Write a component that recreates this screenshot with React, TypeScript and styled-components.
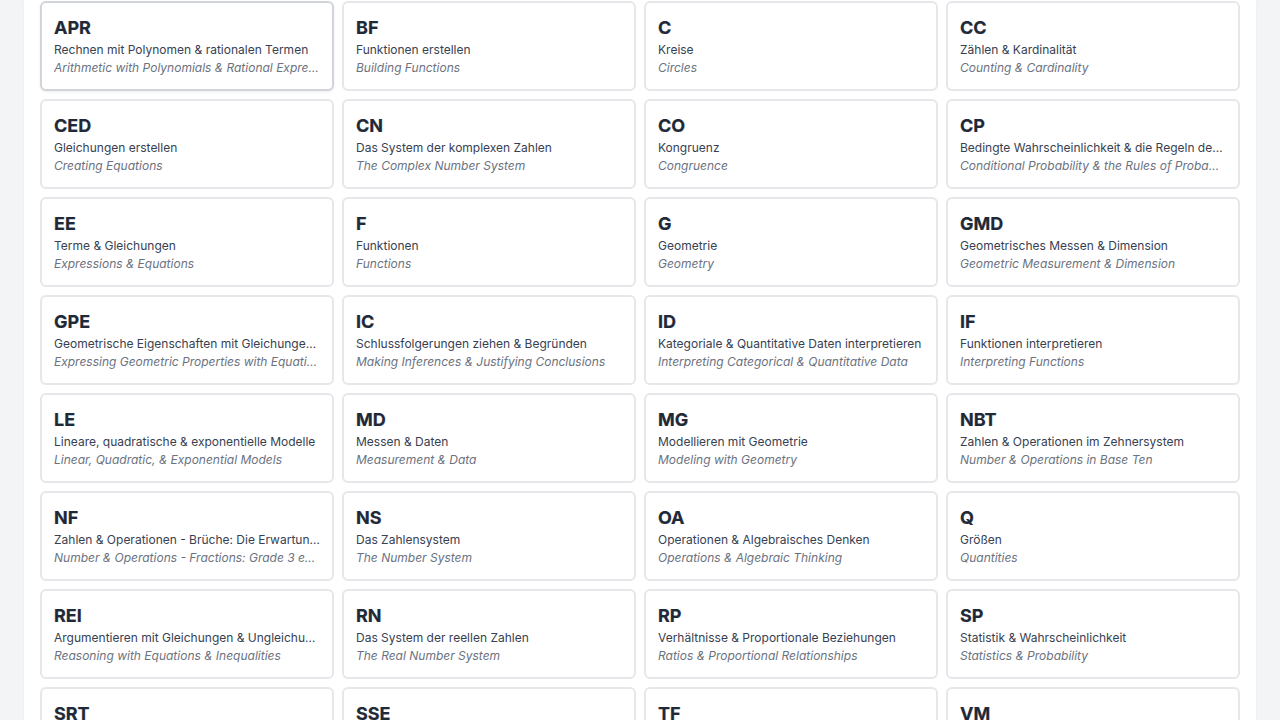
import styled, { createGlobalStyle } from "styled-components";

const GlobalStyle = createGlobalStyle`
  html, body {
    margin: 0;
    padding: 0;
    background: #f3f4f6;
    font-family: Inter, "Noto Sans", sans-serif;
    overflow: hidden;
  }
`;

type Domain = { code: string; de: string; en: string };

const domains: Domain[] = [
  { code: "APR", de: "Rechnen mit Polynomen & rationalen Termen", en: "Arithmetic with Polynomials & Rational Expressions" },
  { code: "BF", de: "Funktionen erstellen", en: "Building Functions" },
  { code: "C", de: "Kreise", en: "Circles" },
  { code: "CC", de: "Zählen & Kardinalität", en: "Counting & Cardinality" },
  { code: "CED", de: "Gleichungen erstellen", en: "Creating Equations" },
  { code: "CN", de: "Das System der komplexen Zahlen", en: "The Complex Number System" },
  { code: "CO", de: "Kongruenz", en: "Congruence" },
  { code: "CP", de: "Bedingte Wahrscheinlichkeit & die Regeln der Wahrscheinlichkeit", en: "Conditional Probability & the Rules of Probability" },
  { code: "EE", de: "Terme & Gleichungen", en: "Expressions & Equations" },
  { code: "F", de: "Funktionen", en: "Functions" },
  { code: "G", de: "Geometrie", en: "Geometry" },
  { code: "GMD", de: "Geometrisches Messen & Dimension", en: "Geometric Measurement & Dimension" },
  { code: "GPE", de: "Geometrische Eigenschaften mit Gleichungen ausdrücken", en: "Expressing Geometric Properties with Equations" },
  { code: "IC", de: "Schlussfolgerungen ziehen & Begründen", en: "Making Inferences & Justifying Conclusions" },
  { code: "ID", de: "Kategoriale & Quantitative Daten interpretieren", en: "Interpreting Categorical & Quantitative Data" },
  { code: "IF", de: "Funktionen interpretieren", en: "Interpreting Functions" },
  { code: "LE", de: "Lineare, quadratische & exponentielle Modelle", en: "Linear, Quadratic, & Exponential Models" },
  { code: "MD", de: "Messen & Daten", en: "Measurement & Data" },
  { code: "MG", de: "Modellieren mit Geometrie", en: "Modeling with Geometry" },
  { code: "NBT", de: "Zahlen & Operationen im Zehnersystem", en: "Number & Operations in Base Ten" },
  { code: "NF", de: "Zahlen & Operationen - Brüche: Die Erwartungen der Klasse 3", en: "Number & Operations - Fractions: Grade 3 expectations" },
  { code: "NS", de: "Das Zahlensystem", en: "The Number System" },
  { code: "OA", de: "Operationen & Algebraisches Denken", en: "Operations & Algebraic Thinking" },
  { code: "Q", de: "Größen", en: "Quantities" },
  { code: "REI", de: "Argumentieren mit Gleichungen & Ungleichungen", en: "Reasoning with Equations & Inequalities" },
  { code: "RN", de: "Das System der reellen Zahlen", en: "The Real Number System" },
  { code: "RP", de: "Verhältnisse & Proportionale Beziehungen", en: "Ratios & Proportional Relationships" },
  { code: "SP", de: "Statistik & Wahrscheinlichkeit", en: "Statistics & Probability" },
  { code: "SRT", de: "Ähnlichkeit, rechtwinklige Dreiecke & Trigonometrie", en: "Similarity, Right Triangles, & Trigonometry" },
  { code: "SSE", de: "Die Struktur von Termen sehen", en: "Seeing Structure in Expressions" },
  { code: "TF", de: "Trigonometrische Funktionen", en: "Trigonometric Functions" },
  { code: "VM", de: "Vektor- & Matrixgrößen", en: "Vector & Matrix Quantities" },
];

export default function App() {
  return (
    <>
      <GlobalStyle />
      <Page>
        <Panel>
          <CardGrid>
            {domains.map((d, i) => (
              <Card key={d.code} $active={i === 0}>
                <Code>{d.code}</Code>
                <German>{d.de}</German>
                <English>{d.en}</English>
              </Card>
            ))}
          </CardGrid>
        </Panel>
      </Page>
    </>
  );
}

const Page = styled.div`
  height: 720px;
  padding: 0 24px;
  box-sizing: border-box;
  overflow: hidden;
`;

const Panel = styled.main`
  background: #ffffff;
  min-height: 100%;
  padding: 1px 16px 0;
  box-sizing: border-box;
  box-shadow: 0 1px 2px rgba(0, 0, 0, 0.04);
`;

const CardGrid = styled.div`
  display: grid;
  grid-template-columns: repeat(4, 1fr);
  gap: 8px;
`;

const Card = styled.div<{ $active?: boolean }>`
  min-width: 0;
  border: 2px solid ${(p) => (p.$active ? "#d1d5db" : "#e5e7eb")};
  border-radius: 6px;
  padding: 12px;
  background: #ffffff;
  box-shadow: ${(p) => (p.$active ? "0 1px 3px rgba(0,0,0,0.08)" : "none")};
  cursor: pointer;
`;

const Code = styled.div`
  font-size: 18px;
  line-height: 25px;
  margin-bottom: 1px;
  font-weight: 700;
  color: #1f2937;
  -webkit-text-stroke: 0.2px #1f2937;
`;

const German = styled.div`
  font-size: 12px;
  line-height: 18px;
  color: #374151;
  white-space: nowrap;
  overflow: hidden;
  text-overflow: ellipsis;
`;

const English = styled(German)`
  font-style: italic;
  color: #6b7280;
`;
